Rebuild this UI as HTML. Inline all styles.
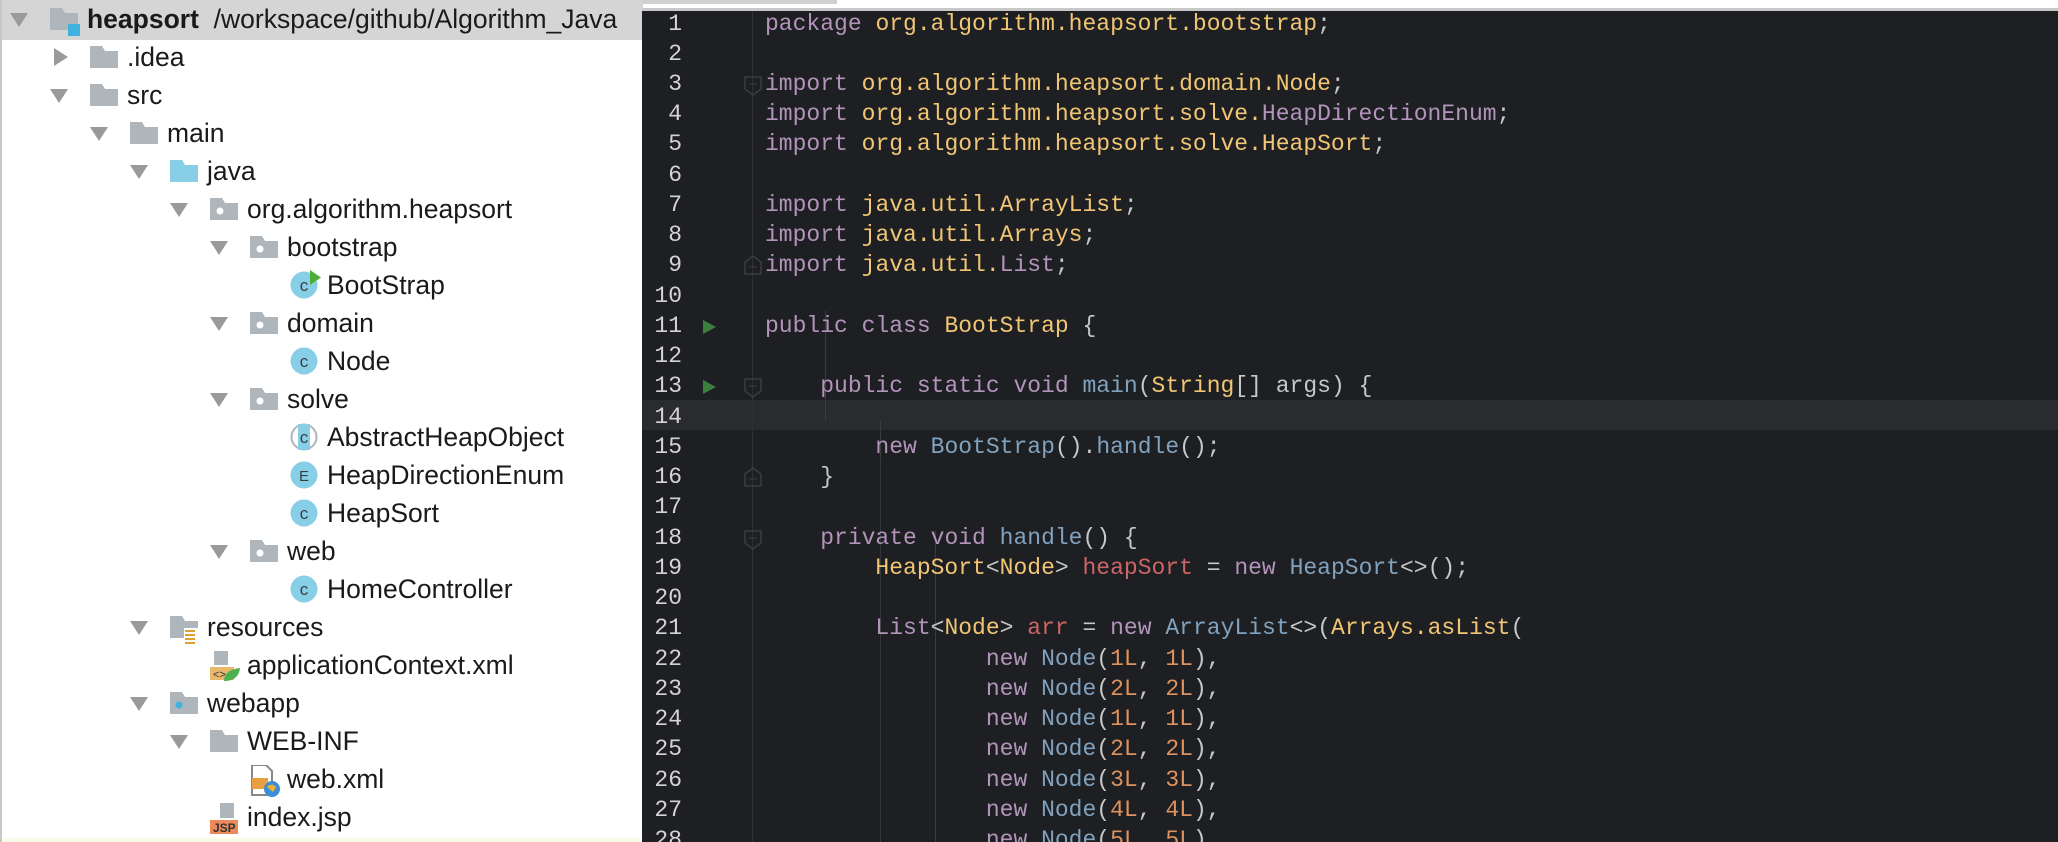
<!DOCTYPE html>
<html><head><meta charset="utf-8"><style>
html,body{margin:0;padding:0;}
body{width:2058px;height:842px;overflow:hidden;background:#fff;position:relative;font-family:"Liberation Sans",sans-serif;}
#tree{position:absolute;left:0;top:0;width:641px;height:842px;background:#fff;border-left:2px solid #c8c8c8;box-sizing:border-box;}
.row{position:absolute;left:0;height:38px;width:641px;overflow:hidden;}
.row .t{position:absolute;top:0;line-height:38px;font-size:26.5px;color:#1a1a1a;white-space:nowrap;}
.row svg{position:absolute;}
#ed{position:absolute;left:642px;top:11px;width:1416px;height:831px;background:#1e1f22;overflow:hidden;}
.ln{position:absolute;left:0;width:40px;text-align:right;font-family:"Liberation Mono",monospace;font-size:23px;color:#d4d4d4;line-height:30.24px;}
.cl{position:absolute;left:123px;font-family:"Liberation Mono",monospace;font-size:23px;color:#c5c8c6;line-height:30.24px;white-space:pre;}
.k{color:#b294bb}.y{color:#f0c674}.b{color:#81a2be}.r{color:#cc6666}.o{color:#de935f}
</style></head><body>
<div style="position:absolute;left:642px;top:0;width:195px;height:4px;background:#d0d0d0"></div>
<div style="position:absolute;left:642px;top:8px;width:1416px;height:3px;background:#c8c8c8"></div>
<div id="tree">
<svg width="0" height="0" style="position:absolute">
<defs>
<g id="down"><path d="M0 0h18L9 14z" fill="#9a9a9a"/></g>
<g id="right"><path d="M0 0v18L14 9z" fill="#9a9a9a"/></g>
<g id="fold"><path d="M0 0h12l3 5h13v17H0z" fill="#aeb5bb"/></g>
<g id="pkg"><path d="M0 0h12l3 5h13v17H0z" fill="#aeb5bb"/><circle cx="10" cy="13" r="3.5" fill="#fff"/></g>
<g id="cls"><circle cx="14" cy="15" r="13.5" fill="#87cee7"/><text x="14" y="21" font-size="17" text-anchor="middle" fill="#3a3f44" font-family="Liberation Sans">c</text></g>
</defs></svg>
</div>
<div id="ed"></div>
<script>
var T=document.getElementById('tree');
var rows=[
[0,'heapsort','root'],[1,'.idea','right'],[1,'src','f'],[2,'main','f'],[3,'java','jf'],[4,'org.algorithm.heapsort','p'],
[5,'bootstrap','p'],[6,'BootStrap','cr'],[5,'domain','p'],[6,'Node','c'],[5,'solve','p'],[6,'AbstractHeapObject','ca'],
[6,'HeapDirectionEnum','e'],[6,'HeapSort','c'],[5,'web','p'],[6,'HomeController','c'],[3,'resources','res'],
[4,'applicationContext.xml','xml'],[3,'webapp','wa'],[4,'WEB-INF','f'],[5,'web.xml','wx'],[4,'index.jsp','jsp']];
var h='';
rows.forEach(function(r,i){
 var lv=r[0],n=r[1],ty=r[2],top=i*38;
 var s='<div class="row" style="top:'+top+'px;'+(i==0?'height:40px;background:#d5d5d5;':'')+'">';
 var tx=10+40*lv, fx=48+40*lv, txt=83+40*lv;
 var leaf=['cr','c','ca','e','xml','wx','jsp'].indexOf(ty)>=0;
 if(!leaf){
  if(ty=='right') s+='<svg style="left:'+(tx+2)+'px;top:10px" width="16" height="18"><use href="#right"/></svg>';
  else s+='<svg style="left:'+(tx-2)+'px;top:13px" width="18" height="14"><use href="#down"/></svg>';
 }
 var icon='';
 if(ty=='root') icon='<path d="M0 0h12l3 5h13v17H0z" fill="#aeb5bb"/><rect x="18" y="16" width="12" height="12" fill="#3fb2e0"/>';
 else if(ty=='f'||ty=='right') icon='<use href="#fold"/>';
 else if(ty=='jf') icon='<path d="M0 0h12l3 5h13v17H0z" fill="#87cee7"/>';
 else if(ty=='p') icon='<use href="#pkg"/>';
 else if(ty=='res') icon='<path d="M0 0h12l3 5h13v17H0z" fill="#aeb5bb"/><rect x="14" y="12" width="14" height="16" fill="#fff"/><path d="M15 15h10M15 19h10M15 23h10M15 27h10" stroke="#e0a030" stroke-width="2"/>';
 else if(ty=='wa') icon='<path d="M0 0h12l3 5h13v17H0z" fill="#aeb5bb"/><circle cx="9" cy="13" r="3.5" fill="#3fb2e0"/>';
 else if(ty=='cr') icon='<use href="#cls"/><path d="M20 0v15l11-7.5z" fill="#4caf35"/>';
 else if(ty=='c') icon='<use href="#cls"/>';
 else if(ty=='ca') icon='<circle cx="14" cy="15" r="12.5" fill="none" stroke="#aeb5bb" stroke-width="2"/><path d="M8 2h12v26H8z" fill="#87cee7"/><text x="14" y="21" font-size="17" text-anchor="middle" fill="#3a3f44">c</text>';
 else if(ty=='e') icon='<circle cx="14" cy="15" r="13.5" fill="#87cee7"/><text x="14" y="21" font-size="15" text-anchor="middle" fill="#3a3f44">E</text>';
 else if(ty=='xml') icon='<path d="M4 0h14v14H4z" fill="#aeb5bb"/><rect x="0" y="16" width="24" height="13" fill="#e9b86a"/><text x="3" y="27" font-size="11" fill="#333">&lt;&gt;</text><path d="M14 30c0-9 8-12 16-13-1 9-7 13-16 13z" fill="#4caf50"/>';
 else if(ty=='wx') icon='<path d="M2 0h14l6 6v24H2z" fill="#fff" stroke="#888" stroke-width="2"/><rect x="2" y="13" width="16" height="11" fill="#e9a040"/><circle cx="22" cy="24" r="8" fill="#3a8fd8"/><path d="M17 22c2-3 7-3 9 0l-3 5z" fill="#f0b030"/>';
 else if(ty=='jsp') icon='<path d="M10 0h14v15H10z" fill="#aeb5bb"/><rect x="0" y="17" width="28" height="14" fill="#ec8a5a"/><text x="3" y="29" font-size="12" fill="#333" font-weight="bold">JSP</text>';
 var iy=(ty=='xml'||ty=='jsp'||ty=='wx')?5:(leaf?4:8);
 s+='<svg style="left:'+fx+'px;top:'+iy+'px" width="34" height="34">'+icon+'</svg>';
 if(ty=='root') s+='<span class="t" style="left:85px;"><b>heapsort</b>&nbsp; /workspace/github/Algorithm_Java</span>';
 else s+='<span class="t" style="left:'+(txt+2)+'px">'+n+'</span>';
 s+='</div>';
 h+=s;
});
h+='<div style="position:absolute;left:0;top:838px;width:641px;height:4px;background:#fbfbe8"></div>';
T.innerHTML+=h;

var code=[
'<span class="k">package</span> <span class="y">org.algorithm.heapsort.bootstrap</span>;',
'',
'<span class="k">import</span> <span class="y">org.algorithm.heapsort.domain.Node</span>;',
'<span class="k">import</span> <span class="y">org.algorithm.heapsort.solve.</span><span class="k">HeapDirectionEnum</span>;',
'<span class="k">import</span> <span class="y">org.algorithm.heapsort.solve.HeapSort</span>;',
'',
'<span class="k">import</span> <span class="y">java.util.ArrayList</span>;',
'<span class="k">import</span> <span class="y">java.util.Arrays</span>;',
'<span class="k">import</span> <span class="y">java.util.</span><span class="k">List</span>;',
'',
'<span class="k">public class</span> <span class="y">BootStrap</span> {',
'',
'    <span class="k">public static void</span> <span class="b">main</span>(<span class="y">String</span>[] args) {',
'',
'        <span class="k">new</span> <span class="b">BootStrap</span>().<span class="b">handle</span>();',
'    }',
'',
'    <span class="k">private void</span> <span class="b">handle</span>() {',
'        <span class="y">HeapSort</span>&lt;<span class="y">Node</span>&gt; <span class="r">heapSort</span> = <span class="k">new</span> <span class="b">HeapSort</span>&lt;&gt;();',
'',
'        <span class="k">List</span>&lt;<span class="y">Node</span>&gt; <span class="r">arr</span> = <span class="k">new</span> <span class="b">ArrayList</span>&lt;&gt;(<span class="y">Arrays.asList</span>(',
];
var nn=[[1,1],[2,2],[1,1],[2,2],[3,3],[4,4],[5,5]];
nn.forEach(function(p){code.push('                <span class="k">new</span> <span class="b">Node</span>(<span class="o">'+p[0]+'L</span>, <span class="o">'+p[1]+'L</span>),');});
var E=document.getElementById('ed'),o='';
o+='<div style="position:absolute;left:0;top:389px;width:1416px;height:30px;background:#2a2b2e"></div>';
o+='<div style="position:absolute;left:110px;top:0;width:1px;height:831px;background:#2e3033"></div>';
o+='<div style="position:absolute;left:183px;top:300px;width:1px;height:110px;background:#3a3c40"></div>';
o+='<div style="position:absolute;left:238px;top:410px;width:1px;height:110px;background:#3a3c40"></div>';
o+='<div style="position:absolute;left:238px;top:450px;width:1px;height:381px;background:#33353a"></div>';
o+='<div style="position:absolute;left:293px;top:520px;width:1px;height:311px;background:#3a3c40"></div>';
[[10],[12]].forEach(function(a){o+='<svg style="position:absolute;left:60px;top:'+(-2.5+a[0]*30.24+8)+'px" width="16" height="16"><path d="M1 1v14l13-7z" fill="#3d7f3f"/></svg>';});
[2,12,17].forEach(function(l){o+='<svg style="position:absolute;left:101px;top:'+(-2.5+l*30.24+6)+'px" width="20" height="22"><path d="M2 2h16v12l-8 6-8-6z" fill="none" stroke="#3a3c40" stroke-width="1.5"/><path d="M6 9h8" stroke="#3a3c40"/></svg>';});
[8,15].forEach(function(l){o+='<svg style="position:absolute;left:101px;top:'+(-2.5+l*30.24+4)+'px" width="20" height="22"><path d="M2 20h16V8l-8-6-8 6z" fill="none" stroke="#3a3c40" stroke-width="1.5"/><path d="M6 13h8" stroke="#3a3c40"/></svg>';});
for(var i=0;i<28;i++){
 var t=-2.5+i*30.24;
 o+='<div class="ln" style="top:'+t+'px">'+(i+1)+'</div>';
 if(code[i]) o+='<div class="cl" style="top:'+t+'px">'+code[i]+'</div>';
}
E.innerHTML=o;
</script>
</body></html>
